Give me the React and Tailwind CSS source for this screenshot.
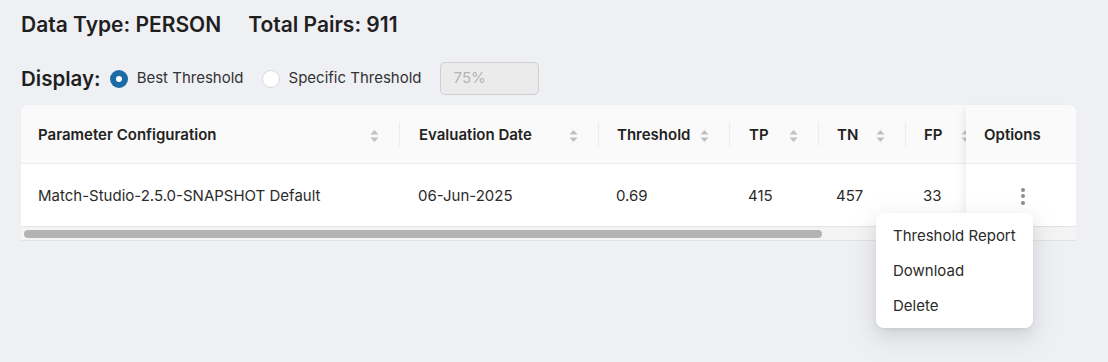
import React from "react";

const SortIcon = () => (
  <svg width="9" height="14" viewBox="0 0 9 14" className="shrink-0">
    <path d="M4.5 1 L8.5 5.5 L0.5 5.5 Z" fill="#bfbfbf" />
    <path d="M4.5 13 L8.5 8.5 L0.5 8.5 Z" fill="#bfbfbf" />
  </svg>
);

const cols = [
  { title: "Parameter Configuration", value: "Match-Studio-2.5.0-SNAPSHOT Default", w: "w-[378px]", pl: "pl-[17px]" },
  { title: "Evaluation Date", value: "06-Jun-2025", w: "w-[199px]", pl: "pl-[19px]" },
  { title: "Threshold", value: "0.69", w: "w-[131px]", pl: "pl-[18px]" },
  { title: "TP", value: "415", w: "w-[89px]", pl: "pl-[19px]" },
  { title: "TN", value: "457", w: "w-[87px]", pl: "pl-[18px]" },
  { title: "FP", value: "33", w: "w-[85px]", pl: "pl-[18px]" },
];

export default function App() {
  return (
    <div
      className="relative min-h-[362px] w-[1108px] bg-[#eff0f4] px-[21px] pt-[11px] text-[#1f1f1f]"
      style={{ fontFamily: "Inter, 'Noto Sans', sans-serif" }}
    >
      <div className="flex items-center gap-[27px] text-[21px] leading-[28px] font-semibold">
        <span>Data Type: PERSON</span>
        <span>Total Pairs: 911</span>
      </div>

      <div className="mt-[23px] flex h-[33px] items-center">
        <span className="text-[20.5px] font-semibold leading-[28px]">Display:</span>
        <span className="ml-[9px] flex h-[18px] w-[18px] items-center justify-center rounded-full bg-[#1c6aa6]">
          <span className="h-[6px] w-[6px] rounded-full bg-white" />
        </span>
        <span className="ml-[9px] text-[15px] text-[#333]">Best Threshold</span>
        <span className="ml-[18px] h-[18px] w-[18px] rounded-full border border-[#d9d9d9] bg-white" />
        <span className="ml-[9px] text-[15px] text-[#333]">Specific Threshold</span>
        <div className="ml-[18px] flex h-[33px] w-[99px] items-center rounded-[5px] border border-[#cfcfcf] bg-[#ebebeb] pl-[13px] text-[15px] text-[#b4b4b4]">
          75%
        </div>
      </div>

      <div className="mt-[10px] w-[1055px]">
        <div className="flex rounded-t-[8px] bg-white">
          <div className="flex-1 overflow-hidden rounded-tl-[8px]">
            <div className="flex w-max">
              {cols.map((c, i) => (
                <div key={i} className={`${c.w} shrink-0`}>
                  <div className="flex h-[59px] items-center border-b border-[#ececec] bg-[#fafafa]">
                    {i > 0 && <span className="h-[24px] w-px shrink-0 bg-[#ececec]" />}
                    <div className={`flex flex-1 items-center justify-between pt-[3px] ${c.pl} pr-[20px]`}>
                      <span className="text-[15px] font-semibold text-[#222]">{c.title}</span>
                      <SortIcon />
                    </div>
                  </div>
                  <div className={`flex h-[62px] items-center pt-[3px] ${c.pl} text-[15px] text-[#2b2b2b]`}>
                    {c.value}
                  </div>
                </div>
              ))}
            </div>
          </div>
          <div className="w-[110px] shrink-0 rounded-tr-[8px] bg-white shadow-[-6px_0_8px_-4px_rgba(0,0,0,0.08)]">
            <div className="flex h-[59px] items-center rounded-tr-[8px] border-b border-[#ececec] bg-[#fafafa] pl-[18px] pt-[3px] text-[15px] font-semibold text-[#222]">
              Options
            </div>
            <div className="flex h-[62px] items-center justify-center pt-[2px]">
              <div className="flex flex-col items-center gap-[2.5px] pl-[3px]">
                <span className="h-[4px] w-[4px] rounded-full bg-[#8c8c8c]" />
                <span className="h-[4px] w-[4px] rounded-full bg-[#8c8c8c]" />
                <span className="h-[4px] w-[4px] rounded-full bg-[#8c8c8c]" />
              </div>
            </div>
          </div>
        </div>
        <div className="flex h-[15px] items-center border-t border-b border-[#e3e3e3] bg-[#f4f4f4] pl-[3px]">
          <div className="h-[8px] w-[798px] rounded-full bg-[#b3b3b3]" />
        </div>
      </div>

      <div className="absolute left-[876px] top-[213px] w-[157px] rounded-[8px] bg-white pt-[6px] pb-[4px] text-[15px] text-[#2b2b2b] shadow-[0_6px_16px_rgba(0,0,0,0.08),0_3px_6px_-4px_rgba(0,0,0,0.12),0_9px_28px_8px_rgba(0,0,0,0.05)]">
        <div className="flex h-[35px] items-center pl-[17px]">Threshold Report</div>
        <div className="flex h-[35px] items-center pl-[17px]">Download</div>
        <div className="flex h-[35px] items-center pl-[17px]">Delete</div>
      </div>
    </div>
  );
}
